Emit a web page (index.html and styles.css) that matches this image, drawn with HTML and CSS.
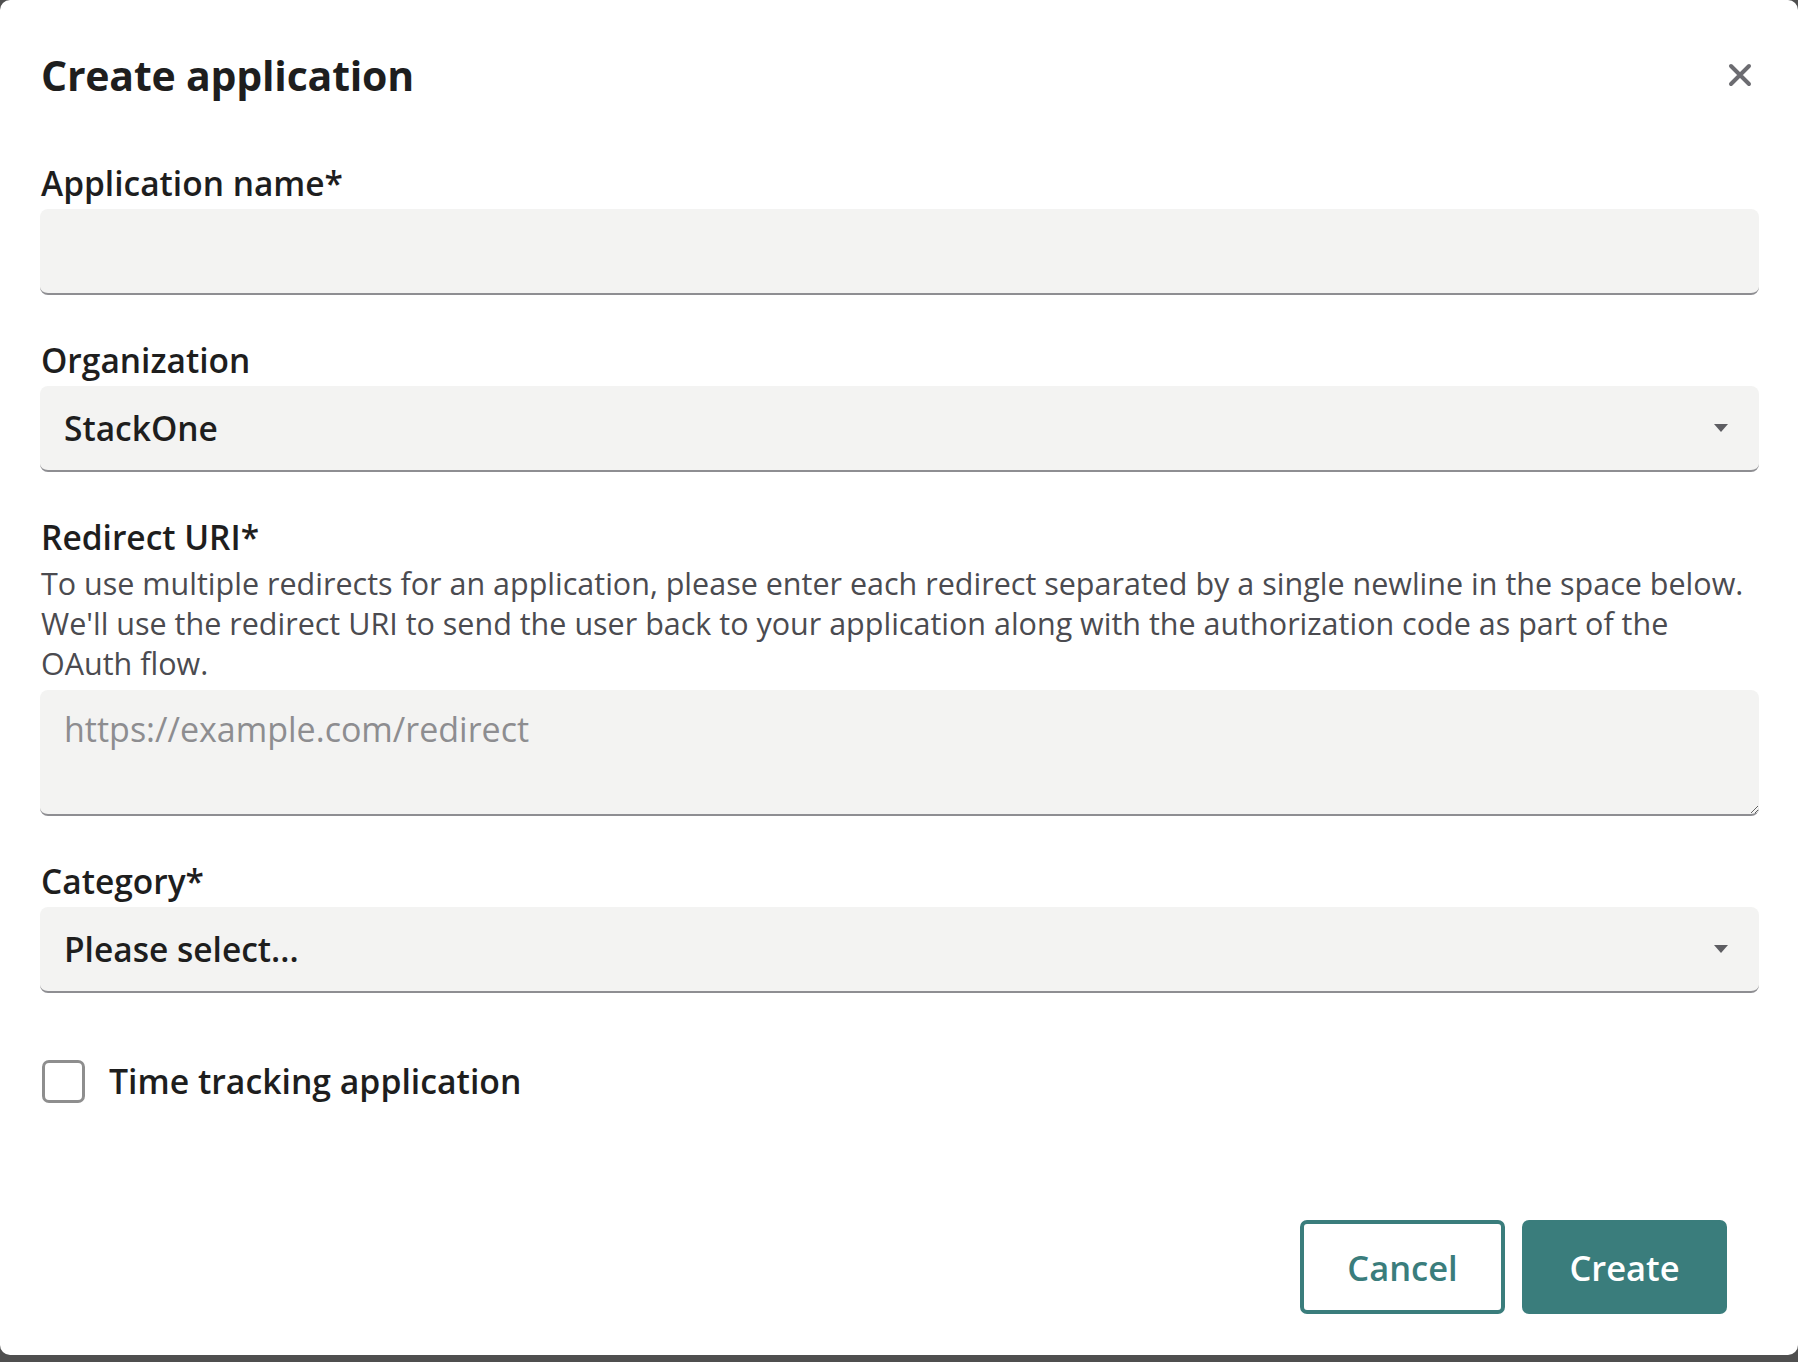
FILE: index.html
```html
<!DOCTYPE html>
<html lang="en">
<head>
<meta charset="utf-8">
<title>Create application</title>
<link rel="stylesheet" href="styles.css">
</head>
<body>
<div class="dialog">
  <div class="header">
    <h1 class="title">Create application</h1>
    <button class="close" aria-label="Close">
      <svg width="24" height="24" viewBox="0 0 24 24"><path d="M3 3 L21 21 M21 3 L3 21" stroke="#6c6c71" stroke-width="4" stroke-linecap="round"/></svg>
    </button>
  </div>

  <div class="field">
    <label class="label">Application name*</label>
    <input class="input" type="text">
  </div>

  <div class="field">
    <label class="label">Organization</label>
    <div class="select">
      <span class="select-text">StackOne</span>
      <svg class="arrow" width="14" height="8" viewBox="0 0 14 8"><path d="M0 0 H14 L7 8 Z" fill="#5d5d62"/></svg>
    </div>
  </div>

  <div class="field">
    <label class="label">Redirect URI*</label>
    <p class="help">To use multiple redirects for an application, please enter each redirect separated by a single newline in the space below. We'll use the redirect URI to send the user back to your application along with the authorization code as part of the OAuth flow.</p>
    <textarea class="textarea" placeholder="https://example.com/redirect"></textarea>
  </div>

  <div class="field">
    <label class="label">Category*</label>
    <div class="select">
      <span class="select-text">Please select...</span>
      <svg class="arrow" width="14" height="8" viewBox="0 0 14 8"><path d="M0 0 H14 L7 8 Z" fill="#5d5d62"/></svg>
    </div>
  </div>

  <div class="check-row">
    <span class="checkbox"></span>
    <span class="check-label">Time tracking application</span>
  </div>

  <div class="actions">
    <button class="btn btn-outline">Cancel</button>
    <button class="btn btn-primary">Create</button>
  </div>
</div>
</body>
</html>
```

FILE: styles.css
```css
html, body {
  margin: 0;
  padding: 0;
}
body {
  background: #4f4f4f;
  font-family: "Open Sans", "Noto Sans", sans-serif;
  color: #1e1e1e;
  height: 1362px;
  overflow: hidden;
}
.dialog {
  background: #ffffff;
  height: 1355px;
  box-sizing: border-box;
  border-radius: 10px;
  padding: 50px 39px 0 40px;
  display: flex;
  flex-direction: column;
}
.header {
  display: flex;
  justify-content: space-between;
  align-items: center;
  height: 50px;
  margin-bottom: 63px;
}
.title {
  margin: 0 0 0 1px;
  font-size: 41px;
  font-weight: 700;
  line-height: 50px;
  letter-spacing: -0.2px;
  color: #1e1e1e;
}
.close {
  border: none;
  background: none;
  padding: 0;
  margin-right: 7px;
  width: 24px;
  height: 24px;
  display: flex;
}
.field {
  display: flex;
  flex-direction: column;
  margin-bottom: 45px;
}
.label {
  font-size: 33.5px;
  font-weight: 600;
  line-height: 40px;
  margin: 0 0 6px 1px;
  color: #1e1e1e;
}
.input, .select, .textarea {
  box-sizing: border-box;
  width: 100%;
  background: #f3f3f2;
  border: none;
  border-bottom: 2px solid #8e8e92;
  border-radius: 8px;
  font-family: inherit;
  outline: none;
}
.input {
  height: 86px;
  padding: 0 24px;
  font-size: 33px;
}
.select {
  height: 86px;
  padding: 0 31px 0 24px;
  display: flex;
  align-items: center;
  justify-content: space-between;
}
.select-text {
  font-size: 33.5px;
  font-weight: 600;
  color: #1e1e1e;
}
.help {
  margin: 0 0 7px 1px;
  font-size: 30.5px;
  font-weight: 500;
  line-height: 40px;
  color: #4b4b50;
}
.textarea {
  height: 126px;
  padding: 19px 24px;
  font-size: 34px;
  font-weight: 500;
  line-height: 40px;
  resize: vertical;
  display: block;
}
.textarea::placeholder {
  color: #8d8d90;
}
.check-row {
  display: flex;
  align-items: center;
  margin-top: 20px;
  margin-left: 2px;
}
.checkbox {
  box-sizing: border-box;
  width: 43px;
  height: 43px;
  border: 3px solid #8e8e8e;
  border-radius: 7px;
  background: #fff;
}
.check-label {
  margin-left: 24px;
  font-size: 33.75px;
  font-weight: 600;
  color: #1e1e1e;
}
.actions {
  margin-top: auto;
  margin-bottom: 41px;
  margin-right: 32px;
  display: flex;
  justify-content: flex-end;
  gap: 17px;
}
.btn {
  box-sizing: border-box;
  width: 205px;
  height: 94px;
  border-radius: 7px;
  font-family: inherit;
  font-size: 34.5px;
  font-weight: 600;
}
.btn-outline {
  background: #fff;
  border: 4px solid #3a7d7c;
  color: #3a7d7c;
}
.btn-primary {
  background: #3a7d7c;
  border: none;
  color: #fff;
}
```
